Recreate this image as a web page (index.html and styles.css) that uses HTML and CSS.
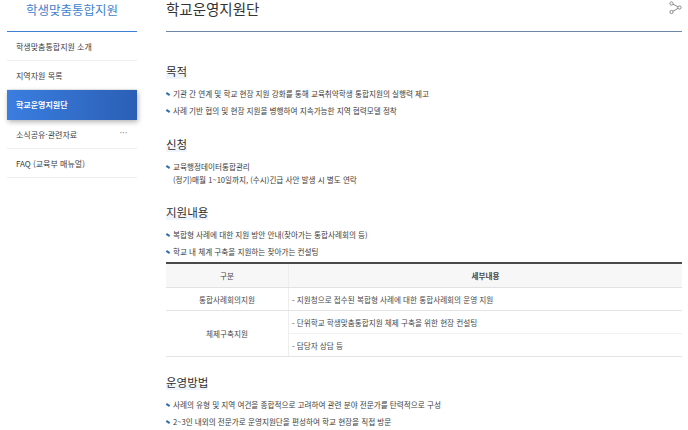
FILE: index.html
```html
<!DOCTYPE html>
<html lang="ko">
<head>
<meta charset="utf-8">
<title>학교운영지원단</title>
<link rel="stylesheet" href="styles.css">
</head>
<body>
<div class="page">
  <aside class="side">
    <h2 class="side-title">학생맞춤통합지원</h2>
    <ul class="menu">
      <li>학생맞춤통합지원 소개</li>
      <li>지역자원 목록</li>
      <li class="active">학교운영지원단</li>
      <li class="more-item"><span>소식공유·관련자료</span><span class="dots">•••</span></li>
      <li>FAQ (교육부 매뉴얼)</li>
    </ul>
  </aside>
  <main class="main">
    <header class="head">
      <h1>학교운영지원단</h1>
      <svg class="share" width="14" height="14" viewBox="0 0 14 14" fill="none" stroke="#888" stroke-width="1"><circle cx="3.5" cy="2.5" r="1.6"/><circle cx="11.5" cy="6.5" r="1.6"/><circle cx="3.5" cy="11" r="1.6"/><path d="M5 3.2 10 5.8M10 7.4 5 10.2"/></svg>
    </header>
    <section class="sec first">
      <h3><span>목적</span></h3>
      <ul class="bul">
        <li>기관 간 연계 및 학교 현장 지원 강화를 통해 교육취약학생 통합지원의 실행력 제고</li>
        <li>사례 기반 협의 및 현장 지원을 병행하여 지속가능한 지역 협력모델 정착</li>
      </ul>
    </section>
    <section class="sec">
      <h3><span>신청</span></h3>
      <ul class="bul">
        <li>교육행정데이터통합관리<br>(정기)매월 1~10일까지, (수시)긴급 사안 발생 시 별도 연락</li>
      </ul>
    </section>
    <section class="sec tight">
      <h3><span>지원내용</span></h3>
      <ul class="bul">
        <li>복합형 사례에 대한 지원 방안 안내(찾아가는 통합사례회의 등)</li>
        <li>학교 내 체계 구축을 지원하는 찾아가는 컨설팅</li>
      </ul>
      <table class="tbl">
        <thead><tr><th class="c1">구분</th><th>세부내용</th></tr></thead>
        <tbody>
          <tr><td class="c1">통합사례회의지원</td><td>- 지원청으로 접수된 복합형 사례에 대한 통합사례회의 운영 지원</td></tr>
          <tr class="sub"><td class="c1" rowspan="2">체제구축지원</td><td>- 단위학교 학생맞춤통합지원 체제 구축을 위한 현장 컨설팅</td></tr>
          <tr><td>- 담당자 상담 등</td></tr>
        </tbody>
      </table>
    </section>
    <section class="sec after-table">
      <h3><span>운영방법</span></h3>
      <ul class="bul">
        <li>사례의 유형 및 지역 여건을 종합적으로 고려하여 관련 분야 전문가를 탄력적으로 구성</li>
        <li>2~3인 내외의 전문가로 운영지원단을 편성하여 학교 현장을 직접 방문</li>
      </ul>
    </section>
  </main>
</div>
</body>
</html>
```
FILE: styles.css
```css
html, body { margin: 0; padding: 0; height: 430px; overflow: hidden; background: #fff; }
body { font-family: "Noto Sans CJK KR", "Noto Sans", sans-serif; color: #444; }
ul { list-style: none; margin: 0; padding: 0; }
.page { display: flex; align-items: flex-start; padding-left: 7px; }
.side { width: 130px; flex: none; }
.side-title { margin: 0; height: 31px; border-bottom: 1px solid #3d7fd0; font-size: 12.5px; font-weight: 400; line-height: 19px; text-align: center; color: #3f83cf; }
.menu li { height: 28px; line-height: 30px; font-size: 8px; padding: 0 9px; color: #3c3c3c; border-bottom: 1px solid #eee; }
.menu li.active { background: linear-gradient(90deg, #3a7ee0, #2b5fb5); color: #fff; font-weight: 700; border-bottom: 0; height: 30px; line-height: 30px; box-shadow: 1px 2px 5px rgba(0,0,0,.3); }
.menu .more-item { display: flex; justify-content: space-between; }
.dots { font-size: 5px; line-height: 24px; color: #999; letter-spacing: 1px; }
.main { width: 516px; margin-left: 29px; flex: none; }
.head { display: flex; justify-content: space-between; height: 31px; border-bottom: 1px solid #6d88a8; }
.head h1 { margin: 0; font-size: 14.5px; font-weight: 400; line-height: 17px; color: #333; }
.share { margin: 1px 0 0; }
.sec { margin-top: 19px; }
.sec.first { margin-top: 31px; }
.sec.tight { margin-top: 18px; }
.sec.after-table { margin-top: 17px; }
.sec h3 { margin: 0 0 7px; font-size: 11.5px; font-weight: 400; line-height: 17px; color: #2e2e2e; }
.sec h3 span { background: linear-gradient(transparent 60%, #eef4fb 60%); }
.bul li { position: relative; padding-left: 7px; font-size: 7.6px; line-height: 13px; margin-bottom: 4px; color: #3c3c3c; }
.bul li::before { content: ""; position: absolute; left: 0; top: 6px; width: 4px; height: 2px; background: #2f6fb5; transform: rotate(35deg); }
.tbl { width: 100%; border-collapse: collapse; border-top: 2px solid #4a4a4a; font-size: 7.6px; color: #484848; }
.tbl th { background: #f7f7f7; font-weight: 400; height: 23px; padding: 0; border-bottom: 1px solid #e2e2e2; }
.tbl th:last-child { font-weight: 700; }
.tbl td { height: 22px; padding: 0 0 0 3px; border-bottom: 1px solid #e4e4e4; border-left: 1px solid #eee; }
.tbl .c1 { width: 122px; text-align: center; padding: 0; border-left: 0; border-right: 1px solid #eee; }
.tbl .sub td:last-child { border-bottom-color: #f2f2f2; }
```
